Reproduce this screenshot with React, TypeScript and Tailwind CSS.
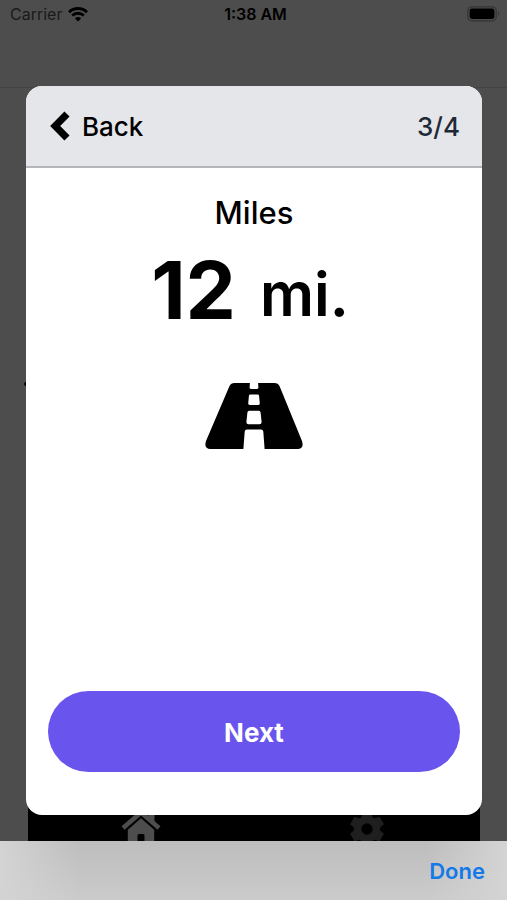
import React from "react";

function WifiIcon() {
  return (
    <svg viewBox="0 0 20 15" className="h-[15px] w-5" aria-hidden="true">
      <path d="M10 14.6 6.9 11.4a4.5 4.5 0 0 1 6.2 0z" fill="#000" />
      <path d="M4.2 8.6a8.3 8.3 0 0 1 11.6 0" fill="none" stroke="#000" strokeWidth="2.8" />
      <path d="M1 5.2a12.8 12.8 0 0 1 18 0" fill="none" stroke="#000" strokeWidth="2.9" />
    </svg>
  );
}

function BatteryIcon() {
  return (
    <svg viewBox="0 0 34 16" className="h-4 w-[34px]" aria-hidden="true">
      <rect x="0.8" y="0.8" width="28.4" height="14" rx="4" fill="none" stroke="#343434" strokeWidth="1.2" />
      <rect x="2.6" y="2.6" width="24.8" height="10.4" rx="2.4" fill="#000" />
      <path d="M31 5.6c1.3.4 1.3 4 0 4.4z" fill="#343434" />
    </svg>
  );
}

function ChevronIcon() {
  return (
    <svg viewBox="0 0 20 30" className="h-[30px] w-5" aria-hidden="true">
      <path d="M17 3 5.2 15 17 27" fill="none" stroke="#000" strokeWidth="7.2" />
    </svg>
  );
}

function RoadIcon() {
  return (
    <svg viewBox="0 0 98 66" className="h-[66px] w-[98px]" aria-hidden="true">
      <path
        fill="#000"
        fillRule="evenodd"
        d="M29.5 0H44.9L44.6 4.4Q44.5 6 46 6H52Q53.5 6 53.4 4.4L53.1 0H69.5Q73 0 74.6 3.2L97 58Q99.4 66 92.5 66H59.6L58.3 48.6Q58.1 46.5 56 46.5H42Q39.9 46.5 39.7 48.6L38.4 66H5.5Q-1.4 66 1 58L24.4 3.2Q26 0 29.5 0ZM45.4 11.5Q44 11.5 43.9 12.9L43.2 20.4Q43.1 22 44.7 22H53.3Q54.9 22 54.8 20.4L54.1 12.9Q54 11.5 52.6 11.5ZM44.2 27.8Q42.6 27.8 42.4 29.4L41.4 38.8Q41.3 41.2 43.5 41.2H54.5Q56.7 41.2 56.6 38.8L55.6 29.4Q55.4 27.8 53.8 27.8Z"
      />
    </svg>
  );
}

function HomeIcon() {
  return (
    <svg viewBox="0 0 40 36" className="h-9 w-10" aria-hidden="true">
      <path d="M27.5 2h6v16l-6-5z" fill="#4d4d4d" />
      <path d="M2 21 20 5.500l18 15.500" fill="none" stroke="#4d4d4d" strokeWidth="4.5" />
      <path
        fillRule="evenodd"
        fill="#4d4d4d"
        d="M20 11.300 33.200 22.700v13.300h-26.400V22.700zM16.500 36h7v-7.500q0-1.500-1.500-1.500h-4q-1.500 0-1.500 1.500z"
      />
    </svg>
  );
}

function GearIcon() {
  return (
    <svg viewBox="-18 -18 36 36" className="size-9" aria-hidden="true">
      <g fill="#1f1f1f">
        {[0, 60, 120, 180, 240, 300].map((angle) => (
          <path key={angle} d="M-6-9-4.4-17h8.8L6-9z" transform={`rotate(${angle})`} />
        ))}
        <circle r="13" />
      </g>
      <circle r="5.7" fill="#000" />
    </svg>
  );
}

export default function App() {
  return (
    <div className="relative flex min-h-screen flex-col overflow-hidden bg-[#4d4d4d] font-['Inter','Liberation_Sans',sans-serif] text-black">
      <header className="h-22 border-b border-[#444444]">
        <div className="grid grid-cols-3 items-center pt-0.5 pr-1.5 pl-2.5 leading-6">
          <span className="flex items-center gap-1.5 text-base text-[#1a1a1a]">
            Carrier <WifiIcon />
          </span>
          <span className="text-center text-base font-semibold">1:38 AM</span>
          <span className="flex justify-end">
            <BatteryIcon />
          </span>
        </div>
      </header>

      <main className="flex-1 px-6 pt-[294px]">
        <div className="size-1 rounded-full bg-black" />
      </main>

      <nav className="mr-[27px] ml-7 grid h-[42px] grid-cols-2 overflow-hidden bg-black">
        <a href="#home" aria-label="Home" className="flex justify-center pt-2">
          <HomeIcon />
        </a>
        <a href="#settings" aria-label="Settings" className="flex justify-center pt-3">
          <GearIcon />
        </a>
      </nav>

      <div className="relative z-20 flex h-[59px] items-center justify-end bg-linear-to-b from-[#bdbdbd] to-[#cbcbcb] px-[22px]">
        <div className="absolute inset-y-0 left-0 w-20 bg-linear-to-r from-[#d4d4d4] to-transparent" />
        <div className="absolute inset-y-0 right-0 w-20 bg-linear-to-l from-[#d4d4d4] to-transparent" />
        <button type="button" className="relative pt-0.5 text-[22px] font-semibold text-[#1379e8]">
          Done
        </button>
      </div>

      <div className="absolute inset-0 z-10 flex flex-col pt-[86px] pr-[25px] pb-[85px] pl-[26px]">
        <section
          role="dialog"
          aria-label="Miles"
          className="flex flex-1 flex-col overflow-hidden rounded-2xl bg-white"
        >
          <div className="flex h-[82px] items-center justify-between border-b-2 border-[#b4b6ba] bg-[#e5e6ea] pr-[22px] pl-6 text-[26px] font-medium">
            <button type="button" className="flex items-center gap-3">
              <ChevronIcon />
              Back
            </button>
            <span className="text-[#1f2937]">3/4</span>
          </div>

          <div className="flex flex-1 flex-col items-center pt-6">
            <h1 className="text-[31px] leading-[42px] font-medium">Miles</h1>
            <p className="mt-4 flex h-20 items-end gap-6 pr-2 leading-none">
              <span className="text-[80px] font-bold">12</span>
              <span className="pb-1.5 text-[60px] font-semibold">mi.</span>
            </p>
            <div className="mt-[53px]">
              <RoadIcon />
            </div>
          </div>

          <div className="px-[22px] pb-[43px]">
            <button
              type="button"
              className="h-[81px] w-full rounded-full bg-[#6a54ee] pt-0.5 text-[26px] font-bold text-white"
            >
              Next
            </button>
          </div>
        </section>
      </div>
    </div>
  );
}
